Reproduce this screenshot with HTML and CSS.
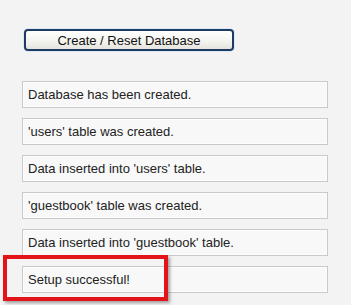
FILE: index.html
```html
<!DOCTYPE html>
<html lang="en">
<head>
  <meta charset="UTF-8">
  <title>Guestbook Setup</title>
  <link rel="stylesheet" href="styles.css">
</head>
<body>

<div class="setup">
  <button class="reset-btn">Create / Reset Database</button>

  <!-- Setup log -->
  <div class="log">
    <div class="log-item">Database has been created.</div>
    <div class="log-item">'users' table was created.</div>
    <div class="log-item">Data inserted into 'users' table.</div>
    <div class="log-item">'guestbook' table was created.</div>
    <div class="log-item">Data inserted into 'guestbook' table.</div>
    <div class="log-item highlight">Setup successful!</div>
  </div>
</div>

</body>
</html>
```

FILE: styles.css
```css
*, *::before, *::after { box-sizing: border-box; }
html, body {
  height: 100%;
}
body {
  margin: 0;
  background: #f3f3f3;
  font-family: 'Liberation Sans', Arial, sans-serif;
  font-size: 13px;
  color: #222;
}

.setup {
  padding: 29px 0 12px 22px;
}

.reset-btn {
  display: block;
  margin-left: 2px;
  width: 210px;
  height: 22px;
  padding: 0;
  font-family: 'Liberation Sans', Arial, sans-serif;
  font-size: 13px;
  color: #111;
  background: linear-gradient(#ffffff, #f3f3ee 60%, #e4e3dc);
  border: 2px solid #1d3b63;
  border-radius: 4px;
  box-shadow: 0 0 0 1px #dbe9f5;
}

.log {
  margin-top: 30px;
  width: 306px;
  display: flex;
  flex-direction: column;
  gap: 10px;
}

.log-item {
  height: 27px;
  line-height: 25px;
  padding-left: 5px;
  background: #f8f8f8;
  border: 1px solid #c9c9c9;
  box-shadow: inset 0 0 0 1px #fdfdfd;
}

.highlight {
  position: relative;
}

.highlight::before {
  content: "";
  position: absolute;
  left: -20px;
  top: -12px;
  width: 165px;
  height: 46px;
  border: 4px solid #e2141a;
  box-shadow: 2px 2px 3px rgba(0,0,0,0.35);
}
```
